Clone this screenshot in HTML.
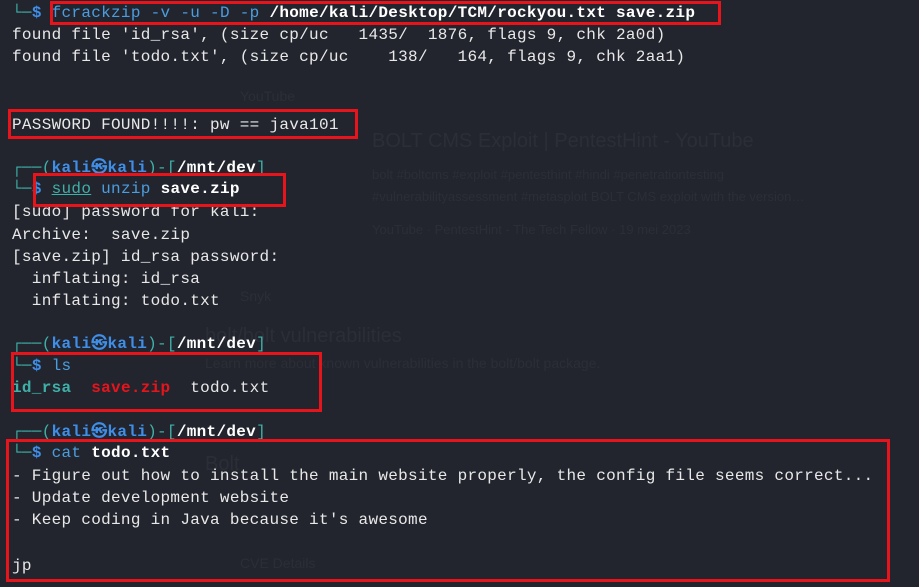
<!DOCTYPE html>
<html><head><style>
body{margin:0;width:919px;height:587px;background:#22252e;overflow:hidden;position:relative;font-family:"Liberation Mono","DejaVu Sans Mono",monospace;font-size:16px;letter-spacing:0.3px;color:#e8e8e8}
.l{position:absolute;left:12px;height:22px;line-height:22px;white-space:pre}
.b{font-weight:bold;color:#fff}
.bl{color:#3f8fe8;font-weight:bold}
.cy{color:#3fb0a8}
.cmd{color:#4a9ee0}
.r{position:absolute;border:3px solid #e8141c;box-sizing:border-box}
.g{position:absolute;font-family:"Liberation Sans",sans-serif;color:#2b2e37;white-space:nowrap;letter-spacing:0}
</style></head><body>
<div class="g" style="left:240px;top:88px;font-size:14px">YouTube</div>
<div class="g" style="left:372px;top:130px;font-size:20px">BOLT CMS Exploit | PentestHint - YouTube</div>
<div class="g" style="left:372px;top:167px;font-size:13px">bolt #boltcms #exploit #pentesthint #hindi #penetrationtesting</div>
<div class="g" style="left:372px;top:189px;font-size:13px">#vulnerabilityassessment #metasploit BOLT CMS exploit with the version…</div>
<div class="g" style="left:372px;top:222px;font-size:13px">YouTube · PentestHint - The Tech Fellow · 19 mei 2023</div>
<div class="g" style="left:240px;top:288px;font-size:14px">Snyk</div>
<div class="g" style="left:205px;top:325px;font-size:20px">bolt/bolt vulnerabilities</div>
<div class="g" style="left:205px;top:355px;font-size:14px">Learn more about known vulnerabilities in the bolt/bolt package.</div>
<div class="g" style="left:205px;top:453px;font-size:20px">Bolt</div>
<div class="g" style="left:240px;top:555px;font-size:14px">CVE Details</div>

<div class="l" style="top:2px"><span class="cy">└─</span><span class="bl">$</span> <span class="cmd">fcrackzip -v -u -D -p</span> <span class="b">/home/kali/Desktop/TCM/rockyou.txt save.zip</span></div>
<div class="l" style="top:24px">found file 'id_rsa', (size cp/uc   1435/  1876, flags 9, chk 2a0d)</div>
<div class="l" style="top:46px">found file 'todo.txt', (size cp/uc    138/   164, flags 9, chk 2aa1)</div>
<div class="l" style="top:114px">PASSWORD FOUND!!!!: pw == java101</div>
<div class="l" style="top:157px"><span class="cy">┌──(</span><span class="bl">kali㉿kali</span><span class="cy">)-[</span><span class="b">/mnt/dev</span><span class="cy">]</span></div>
<div class="l" style="top:178px"><span class="cy">└─</span><span class="bl">$</span> <span class="cy" style="text-decoration:underline">sudo</span> <span class="cmd">unzip</span> <span class="b">save.zip</span></div>
<div class="l" style="top:201px">[sudo] password for kali:</div>
<div class="l" style="top:224px">Archive:  save.zip</div>
<div class="l" style="top:246px">[save.zip] id_rsa password:</div>
<div class="l" style="top:268px">  inflating: id_rsa</div>
<div class="l" style="top:290px">  inflating: todo.txt</div>
<div class="l" style="top:333px"><span class="cy">┌──(</span><span class="bl">kali㉿kali</span><span class="cy">)-[</span><span class="b">/mnt/dev</span><span class="cy">]</span></div>
<div class="l" style="top:355px"><span class="cy">└─</span><span class="bl">$</span> <span class="cmd">ls</span></div>
<div class="l" style="top:377px"><span class="cy" style="font-weight:bold">id_rsa</span>  <span style="color:#e8141c;font-weight:bold">save.zip</span>  todo.txt</div>
<div class="l" style="top:421px"><span class="cy">┌──(</span><span class="bl">kali㉿kali</span><span class="cy">)-[</span><span class="b">/mnt/dev</span><span class="cy">]</span></div>
<div class="l" style="top:442px"><span class="cy">└─</span><span class="bl">$</span> <span class="cmd">cat</span> <span class="b">todo.txt</span></div>
<div class="l" style="top:465px">- Figure out how to install the main website properly, the config file seems correct...</div>
<div class="l" style="top:487px">- Update development website</div>
<div class="l" style="top:509px">- Keep coding in Java because it's awesome</div>
<div class="l" style="top:555px">jp</div>

<div class="r" style="left:50px;top:1px;width:671px;height:24px"></div>
<div class="r" style="left:8px;top:109px;width:350px;height:30px"></div>
<div class="r" style="left:33px;top:173px;width:253px;height:34px"></div>
<div class="r" style="left:11px;top:352px;width:311px;height:60px"></div>
<div class="r" style="left:6px;top:439px;width:884px;height:143px"></div>
</body></html>
